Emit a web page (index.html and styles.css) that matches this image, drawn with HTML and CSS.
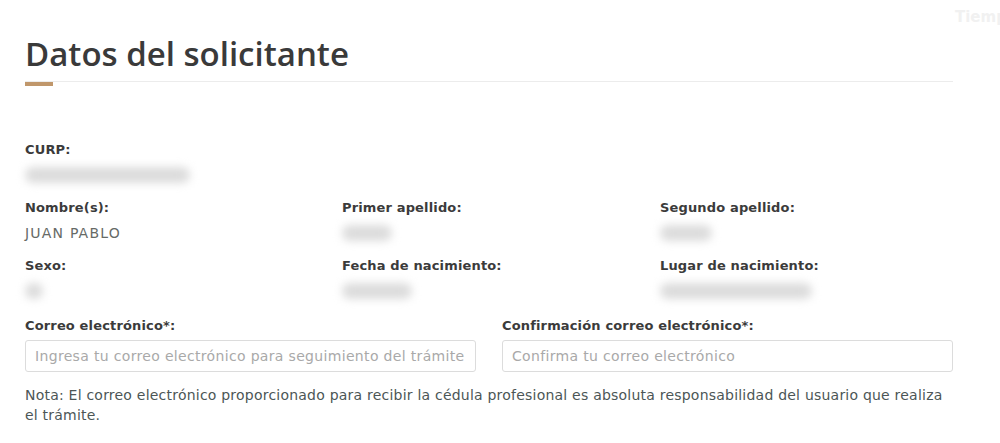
FILE: index.html
```html
<!DOCTYPE html>
<html lang="es">
<head>
<meta charset="utf-8">
<title>Datos del solicitante</title>
<link rel="stylesheet" href="styles.css">
</head>
<body>
<div class="ghost">Tiemp</div>
<main class="page">
  <h1 class="title">Datos del solicitante</h1>
  <div class="rule"></div>
  <div class="accent"></div>

  <section class="fields">
    <div class="row single">
      <div class="field">
        <div class="label">CURP:</div>
        <div class="value"><span class="blur" style="width:165px"></span></div>
      </div>
    </div>
    <div class="row">
      <div class="field">
        <div class="label">Nombre(s):</div>
        <div class="value">JUAN PABLO</div>
      </div>
      <div class="field">
        <div class="label">Primer apellido:</div>
        <div class="value"><span class="blur" style="width:50px"></span></div>
      </div>
      <div class="field">
        <div class="label">Segundo apellido:</div>
        <div class="value"><span class="blur" style="width:52px"></span></div>
      </div>
    </div>
    <div class="row">
      <div class="field">
        <div class="label">Sexo:</div>
        <div class="value"><span class="blur" style="width:18px"></span></div>
      </div>
      <div class="field">
        <div class="label">Fecha de nacimiento:</div>
        <div class="value"><span class="blur" style="width:70px"></span></div>
      </div>
      <div class="field">
        <div class="label">Lugar de nacimiento:</div>
        <div class="value"><span class="blur" style="width:152px"></span></div>
      </div>
    </div>
  </section>

  <section class="emails">
    <div class="email">
      <label class="label" for="mail">Correo electrónico*:</label>
      <input class="input" id="mail" type="text" placeholder="Ingresa tu correo electrónico para seguimiento del trámite">
    </div>
    <div class="email">
      <label class="label" for="mail2">Confirmación correo electrónico*:</label>
      <input class="input" id="mail2" type="text" placeholder="Confirma tu correo electrónico">
    </div>
  </section>

  <p class="note">Nota: El correo electrónico proporcionado para recibir la cédula profesional es absoluta responsabilidad del usuario que realiza el trámite.</p>
</main>
</body>
</html>
```

FILE: styles.css
```css
html, body {
  margin: 0;
  padding: 0;
  background: #ffffff;
}

body {
  font-family: "DejaVu Sans", "Open Sans", sans-serif;
  color: #3d3d3d;
  position: relative;
  height: 443px;
  overflow: hidden;
}

.ghost {
  position: absolute;
  top: 8px;
  left: 955px;
  font-size: 15px;
  color: #f1f1f1;
  font-weight: 600;
  white-space: nowrap;
}

.page {
  width: 928px;
  padding: 0 0 0 25px;
}

.title {
  margin: 34px 0 0 0;
  font-family: "Open Sans", "DejaVu Sans", sans-serif;
  font-size: 33px;
  line-height: 40px;
  font-weight: 600;
  color: #3a3a3a;
}

.rule {
  margin-top: 7px;
  height: 1px;
  background: #ececec;
}

.accent {
  width: 28px;
  height: 4px;
  background: #c0976b;
}

.fields {
  margin-top: 54px;
  display: flex;
  flex-direction: column;
  gap: 13px;
}

.row {
  display: grid;
  grid-template-columns: 317px 318px 1fr;
}

.field {
  display: flex;
  flex-direction: column;
  gap: 5px;
}

.label {
  display: block;
  font-size: 13px;
  line-height: 20px;
  font-weight: 700;
  color: #3b3b3b;
  letter-spacing: 0.15px;
}

.value {
  font-size: 14px;
  line-height: 20px;
  letter-spacing: 1.2px;
  color: #666a66;
  height: 20px;
  display: flex;
  align-items: center;
}

.blur {
  display: block;
  height: 16px;
  background: #dcdcdc;
  border-radius: 8px;
  filter: blur(4px);
}

.emails {
  margin-top: 15px;
  display: grid;
  grid-template-columns: 451px 451px;
  column-gap: 26px;
}

.email {
  display: flex;
  flex-direction: column;
  gap: 4px;
}

.input {
  box-sizing: border-box;
  width: 100%;
  height: 32px;
  border: 1px solid #dcdcdc;
  border-radius: 3px;
  padding: 0 9px;
  font-family: inherit;
  font-size: 14px;
  letter-spacing: 0.33px;
  color: #555;
  background: #fff;
  outline: none;
}

.input::placeholder {
  color: #a9a9a9;
}

.note {
  margin: 13px 0 0 0;
  font-size: 14px;
  line-height: 20px;
  letter-spacing: 0.22px;
  color: #4c5656;
}
```
